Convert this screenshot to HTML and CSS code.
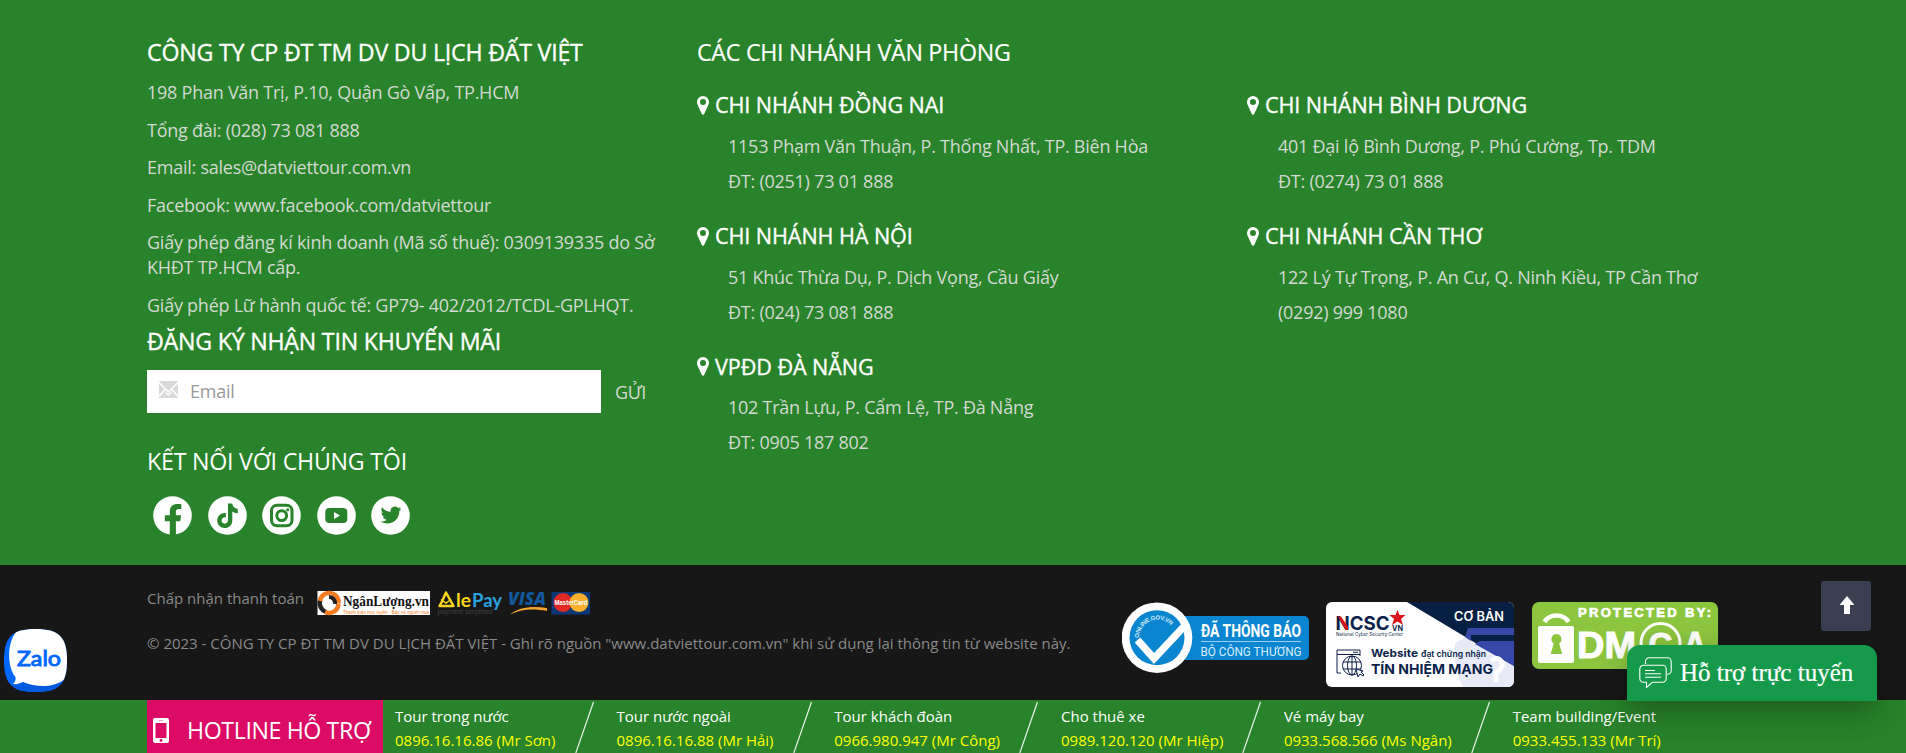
FILE: index.html
```
<!DOCTYPE html>
<html lang="vi">
<head>
<meta charset="utf-8">
<title>Đất Việt Tour</title>
<link rel="stylesheet" href="styles.css">
</head>
<body>
<svg width="0" height="0" class="defs" aria-hidden="true">
  <symbol id="pin" viewBox="0 0 12 19"><path fill-rule="evenodd" d="M6 0a6 6 0 0 1 6 6c0 1.1-.25 2-.7 3L7.2 17.9a1.3 1.3 0 0 1-2.4 0L.7 9A7 7 0 0 1 0 6a6 6 0 0 1 6-6zm0 3a3 3 0 1 0 0 6 3 3 0 0 0 0-6z"/></symbol>
</svg>
<footer class="footer">
  <div class="columns">
    <section class="company">
      <h3 class="title strong">CÔNG TY CP ĐT TM DV DU LỊCH ĐẤT VIỆT</h3>
      <div class="lines">
        <p>198 Phan Văn Trị, P.10, Quận Gò Vấp, TP.HCM</p>
        <p>Tổng đài: (028) 73 081 888</p>
        <p>Email: sales@datviettour.com.vn</p>
        <p>Facebook: www.facebook.com/datviettour</p>
        <p>Giấy phép đăng kí kinh doanh (Mã số thuế): 0309139335 do Sở KHĐT TP.HCM cấp.</p>
        <p>Giấy phép Lữ hành quốc tế: GP79- 402/2012/TCDL-GPLHQT.</p>
      </div>
      <h3 class="title strong">ĐĂNG KÝ NHẬN TIN KHUYẾN MÃI</h3>
      <form class="subscribe">
        <label class="field">
          <svg width="19" height="17" viewBox="0 0 19 17"><path d="M0 0h19v17H0z" fill="#d9d9d9"/><path d="M-.5 1l10 10L19.500 1M0 15.500l6-7M19 15.500l-6-7" fill="none" stroke="#fff" stroke-width="1.500"/><path d="M6.500 11.500L9.500 14l3-2.500" fill="none" stroke="#fff" stroke-width="1.200"/></svg>
          <input type="text" placeholder="Email">
        </label>
        <button type="button">GỬI</button>
      </form>
      <h3 class="title connect">KẾT NỐI VỚI CHÚNG TÔI</h3>
      <div class="social">
        <svg viewBox="0 0 39 39"><circle cx="19.500" cy="19.500" r="19.300"/><path class="g" d="M16.800 39V25.200h-5v-6h5v-3.700c0-5 3-7.600 7.500-7.600 1.700 0 3 .2 4 .4v4.700h-2.500c-2.200 0-2.900 1.200-2.900 2.700v3.500h5.200l-.9 6h-4.300V39z"/></svg>
        <svg viewBox="0 0 39 39"><circle cx="19.500" cy="19.500" r="19.300"/><path class="g" d="M20 7.500h4.200c.5 3 2.300 5 5.600 5.400v4.300c-2.200 0-4-.7-5.500-1.800v8.800c0 5.200-3.700 7.800-7.500 7.800-4.400 0-7.600-3.400-7.600-7.500 0-4.700 3.900-8 8.700-7.500v4.500c-2.300-.6-4.300.9-4.300 3.100 0 1.800 1.400 3.100 3.100 3.100 2 0 3.300-1.300 3.300-3.600z"/></svg>
        <svg viewBox="0 0 39 39"><circle cx="19.500" cy="19.500" r="19.300"/><g class="o"><rect x="9.500" y="9.300" width="20.500" height="20.500" rx="5.500"/><circle cx="19.700" cy="19.600" r="4.900"/></g><circle class="g" cx="25.700" cy="13.800" r="1.500"/></svg>
        <svg viewBox="0 0 39 39"><circle cx="19.500" cy="19.500" r="19.300"/><rect class="g" x="8.300" y="12" width="22" height="15" rx="4"/><path d="M17 16v7l6-3.500z"/></svg>
        <svg viewBox="0 0 39 39"><circle cx="19.500" cy="19.500" r="19.300"/><path class="g" d="M30.300 12.500c-.8.400-1.600.6-2.400.7.900-.5 1.500-1.300 1.800-2.300-.8.500-1.700.8-2.700 1a4.300 4.300 0 0 0-7.300 3.900c-3.500-.2-6.700-1.900-8.700-4.500-1.200 2-.6 4.500 1.300 5.700-.7 0-1.300-.2-1.900-.5 0 2 1.400 3.800 3.400 4.200-.6.200-1.300.2-1.900.1.500 1.700 2.100 2.900 4 3-1.800 1.400-4 2-6.300 1.700 9 5.300 19-.7 18.700-10.400.8-.7 1.500-1.500 2-2.600z"/></svg>
      </div>
    </section>
    <section class="offices">
      <h3 class="title offices-title">CÁC CHI NHÁNH VĂN PHÒNG</h3>
      <div class="branches">
        <article class="branch"><h4><svg><use href="#pin"/></svg>CHI NHÁNH ĐỒNG NAI</h4><p>1153 Phạm Văn Thuận, P. Thống Nhất, TP. Biên Hòa</p><p>ĐT: (0251) 73 01 888</p></article>
        <article class="branch"><h4><svg><use href="#pin"/></svg>CHI NHÁNH BÌNH DƯƠNG</h4><p>401 Đại lộ Bình Dương, P. Phú Cường, Tp. TDM</p><p>ĐT: (0274) 73 01 888</p></article>
        <article class="branch"><h4><svg><use href="#pin"/></svg>CHI NHÁNH HÀ NỘI</h4><p>51 Khúc Thừa Dụ, P. Dịch Vọng, Cầu Giấy</p><p>ĐT: (024) 73 081 888</p></article>
        <article class="branch"><h4><svg><use href="#pin"/></svg>CHI NHÁNH CẦN THƠ</h4><p>122 Lý Tự Trọng, P. An Cư, Q. Ninh Kiều, TP Cần Thơ</p><p>(0292) 999 1080</p></article>
        <article class="branch"><h4><svg><use href="#pin"/></svg>VPĐD ĐÀ NẴNG</h4><p>102 Trần Lựu, P. Cẩm Lệ, TP. Đà Nẵng</p><p>ĐT: 0905 187 802</p></article>
      </div>
    </section>
  </div>
</footer>
<div class="legal">
  <div class="legal-text">
    <div class="pay">
      <span>Chấp nhận thanh toán</span>
      <svg class="paylogos" width="274" height="26" viewBox="0 0 274 26">
        <rect x=".5" y="1" width="112.500" height="24" fill="#fff"/>
        <g fill="none" stroke-width="4.500"><path d="M3 12a9 9 0 0 1 12-8.500" stroke="#f47b20"/><path d="M15 3.500a9 9 0 0 1 6.500 10" stroke="#f47b20"/><path d="M3 11a9.500 9.500 0 0 0 6 11" stroke="#222"/><path d="M8 22a9.500 9.500 0 0 0 13.500-8" stroke="#f47b20"/><path d="M12 7a6 6 0 0 1 6 7" stroke="#222" stroke-width="4"/></g>
        <text x="26" y="15.500" class="serif" font-size="15.500" textLength="86" lengthAdjust="spacingAndGlyphs" fill="#111">NgânLượng.vn</text>
        <text x="26" y="23.500" class="sans" font-size="5.500" textLength="86" lengthAdjust="spacingAndGlyphs" fill="#f47b20">Thanh toán trực tuyến - Bảo vệ người mua</text>
        <path d="M129 2.500l5 9 2.500 4.500h-14l2.500-4.500z" fill="none" stroke="#fbd51b" stroke-width="2.500" stroke-linejoin="round"/><path d="M124 9.500l5 3.500 5-3.500" fill="none" stroke="#fbd51b" stroke-width="1.500"/>
        <text x="139" y="16.500" class="round" font-size="18" textLength="15" lengthAdjust="spacingAndGlyphs" fill="#fbd51b">le</text>
        <text x="155" y="16.500" class="round" font-size="18" textLength="30" lengthAdjust="spacingAndGlyphs" fill="#2ba3e0">Pay</text>
        <text x="120.500" y="23.500" class="sans" font-size="6.500" textLength="55" lengthAdjust="spacingAndGlyphs" fill="#424242">payment simplified</text>
        <text x="191" y="14.500" class="visa" font-size="17" textLength="38" lengthAdjust="spacingAndGlyphs" fill="#12579a">VISA</text>
        <path d="M193 24.500c8-7 22-9 37-6.500v3c-15-3-27-1.500-37 3.500z" fill="#f2a52c"/>
        <rect x="234.500" y="2" width="38.500" height="22.500" fill="#0b3776"/><circle cx="246" cy="12.500" r="9.500" fill="#e02a25"/><circle cx="262" cy="12.500" r="9.500" fill="#f8b02d"/>
        <text x="237.500" y="15" class="sans" font-size="7" font-weight="700" textLength="33" lengthAdjust="spacingAndGlyphs" fill="#fff">MasterCard</text>
      </svg>
    </div>
    <p>© 2023 - CÔNG TY CP ĐT TM DV DU LỊCH ĐẤT VIỆT - Ghi rõ nguồn "www.datviettour.com.vn" khi sử dụng lại thông tin từ website này.</p>
  </div>
  <div class="badges">
    <svg width="187" height="72" viewBox="0 0 187 72">
      <rect x="30" y="14" width="157" height="44" rx="5" fill="#0a86d1"/>
      <circle cx="35" cy="35.700" r="35.300" fill="#fff"/><circle cx="35" cy="35.700" r="27.500" fill="#0a86d1"/>
      <path id="arc" d="M17 36a18.500 18.500 0 0 1 36-6" fill="none"/>
      <text class="sans" font-size="6" font-weight="700" fill="#d8edf9"><textPath href="#arc" textLength="44">ONLINE.GOV.VN</textPath></text>
      <path d="M15.500 38l16.500 18.500L62.500 24" fill="none" stroke="#fff" stroke-width="7.500"/>
      <text x="79" y="35" class="cond" font-size="19" font-weight="700" textLength="100" lengthAdjust="spacingAndGlyphs" fill="#fff">ĐÃ THÔNG BÁO</text>
      <rect x="79" y="39" width="100" height="1" fill="#9ed0ee"/>
      <text x="78.500" y="53.500" class="cond" font-size="13" textLength="101" lengthAdjust="spacingAndGlyphs" fill="#d8edf9">BỘ CÔNG THƯƠNG</text>
    </svg>
    <svg width="188" height="85" viewBox="0 0 188 85">
      <defs><clipPath id="card"><rect width="188" height="85" rx="6"/></clipPath></defs>
      <g clip-path="url(#card)"><rect width="188" height="85" fill="#fff"/>
      <path d="M129 41l17-9 42 24v29h-51c-7-13-9-25-8-44z" fill="#e8eaf8"/>
      <path d="M81 0h107v64z" fill="#061f42"/><path d="M142 26h46v7h-43v6l-6-4z" fill="#3649a8"/><path d="M149 42l5-3h34v25z" fill="#3649a8"/>
      <path d="M165 59q6-5 10 0t-5 12v9" stroke="#fff" stroke-width="5" fill="none"/></g>
      <text x="9.500" y="28" class="inter" font-size="19" font-weight="700" textLength="54" lengthAdjust="spacingAndGlyphs" fill="#0a1f4a">NCSC</text>
      <path d="M12 14.500h3l7 10v3.500h-2z" fill="#d9151b"/>
      <path d="M71.500 8l2 5h6l-4.500 4 2 6-5.500-3.500-5.500 3.500 2-6-4.500-4h6z" fill="#d9151b"/>
      <text x="66" y="28.500" class="inter" font-size="7.500" font-weight="700" textLength="11" lengthAdjust="spacingAndGlyphs" fill="#0a1f4a">VN</text>
      <text x="10" y="34" class="inter" font-size="4.500" textLength="67" lengthAdjust="spacingAndGlyphs" fill="#0a1f4a">National Cyber Security Center</text>
      <text x="153" y="19" text-anchor="middle" class="inter" font-size="12.500" font-weight="600" textLength="50" lengthAdjust="spacingAndGlyphs" fill="#fff">CƠ BẢN</text>
      <g fill="none" stroke="#0a1f4a" stroke-width="1"><path d="M15 71h-4V48h23v6M11 52.500h23M27 50.300h5"/><circle cx="26" cy="63.500" r="9.500"/><ellipse cx="26" cy="63.500" rx="4.500" ry="9.500"/><path d="M17 60h18M17 67h18M26 54v19"/><path d="M30 67l2 8 2-3 3 2 1-1-3-3 2-1z" fill="#fff"/></g>
      <text x="45" y="54.500" class="inter" font-size="11" font-weight="700" textLength="47" lengthAdjust="spacingAndGlyphs" fill="#0a1f4a">Website</text>
      <text x="95" y="54.500" class="inter" font-size="8.500" font-weight="600" textLength="65" lengthAdjust="spacingAndGlyphs" fill="#0a1f4a">đạt chứng nhận</text>
      <text x="45" y="72" class="inter" font-size="13.500" font-weight="700" textLength="122" lengthAdjust="spacingAndGlyphs" fill="#0a1f4a">TÍN NHIỆM MẠNG</text>
    </svg>
    <svg width="186" height="67" viewBox="0 0 186 67">
      <rect width="186" height="67" rx="7" fill="#8cc63f"/>
      <path d="M12.500 20a13.500 12 0 0 1 24 0" fill="none" stroke="#fff" stroke-width="4.500"/><rect x="6" y="24" width="36" height="37" rx="2" fill="#fff"/>
      <path d="M24.500 32a5.200 5.200 0 0 1 2.700 9.500l3 10.500H18.700l3-10.500A5.200 5.200 0 0 1 24.500 32z" fill="#8cc63f"/>
      <text x="46" y="14.800" class="sans heavy" font-size="13" textLength="133" stroke="#fff" stroke-width=".7" fill="#fff">PROTECTED BY:</text>
      <text x="45" y="55.500" class="sans heavy" font-size="37" textLength="59" lengthAdjust="spacingAndGlyphs" stroke="#fff" stroke-width="1" fill="#fff">DM</text>
      <circle cx="128.500" cy="41" r="19.500" fill="none" stroke="#fff" stroke-width="3"/>
      <text x="116.500" y="54" class="sans heavy" font-size="33" stroke="#fff" fill="#fff">C</text>
      <text x="151" y="55.500" class="sans heavy" font-size="36" textLength="24" lengthAdjust="spacingAndGlyphs" stroke="#fff" fill="#fff">A</text>
    </svg>
  </div>
</div>
<div class="hotline">
  <div class="hotline-label"><svg width="16" height="25" viewBox="0 0 16 25"><rect width="16" height="25" rx="2" fill="#fff"/><rect x="2.500" y="5" width="11" height="15" fill="#db0b66"/><circle cx="8" cy="22.500" r="1.400" fill="#db0b66"/><path d="M6 2.500h4" stroke="#f3a4c6"/></svg><span>HOTLINE HỖ TRỢ</span></div>
  <div class="desk d1"><span>Tour trong nước</span><b>0896.16.16.86 (Mr Sơn)</b></div>
  <svg class="slash"><path d="M18.500 1L.8 52"/></svg>
  <div class="desk d2"><span>Tour nước ngoài</span><b>0896.16.16.88 (Mr Hải)</b></div>
  <svg class="slash"><path d="M18.500 1L.8 52"/></svg>
  <div class="desk d3"><span>Tour khách đoàn</span><b>0966.980.947 (Mr Công)</b></div>
  <svg class="slash"><path d="M18.500 1L.8 52"/></svg>
  <div class="desk d4"><span>Cho thuê xe</span><b>0989.120.120 (Mr Hiệp)</b></div>
  <svg class="slash"><path d="M18.500 1L.8 52"/></svg>
  <div class="desk d5"><span>Vé máy bay</span><b>0933.568.566 (Ms Ngân)</b></div>
  <svg class="slash"><path d="M18.500 1L.8 52"/></svg>
  <div class="desk"><span>Team building/Event</span><b>0933.455.133 (Mr Trí)</b></div>
</div>
<a class="zalo"><svg width="63" height="63" viewBox="0 0 63 63"><defs><clipPath id="zc"><path d="M31.500 0C55 0 63 8 63 31.500S55 63 31.500 63 0 55 0 31.500 8 0 31.500 0z"/></clipPath></defs><g clip-path="url(#zc)"><rect width="63" height="63" fill="#0068ff"/><path d="M8 56l12-3c12 5 30 5 43-4v14H15z" fill="#005be0"/><path d="M15 0C2 11 3 38 11.500 48c.5 3-.5 5-2.500 7 4 .5 7-.5 10-2 14 6 31 5 40-1.500l4-3V0z" fill="#fff"/></g><text x="13" y="36.500" class="zt" font-size="20.500" textLength="44" lengthAdjust="spacingAndGlyphs">Zalo</text></svg></a>
<a class="to-top"><svg width="16" height="18" viewBox="0 0 16 18"><path d="M8 0l7.500 9H11v9H5V9H.5z" fill="#fff"/></svg></a>
<a class="chat"><svg width="33" height="31" viewBox="0 0 33 31"><g fill="none" stroke="#fff" stroke-width="1.100" stroke-linejoin="round"><path d="M6.500 7V4.500a3.700 3.700 0 0 1 3.700-3.700h18.300a3.700 3.700 0 0 1 3.700 3.700v9a3.700 3.700 0 0 1-3.700 3.700H28"/><path d="M4.500 8.300h19a3.700 3.700 0 0 1 3.700 3.700v9.500a3.700 3.700 0 0 1-3.700 3.700H13.500L7.500 30.500v-5.300h-3A3.700 3.700 0 0 1 .8 21.500V12a3.700 3.700 0 0 1 3.700-3.700z"/><path d="M6 13.500h10M6 16.800h16M6 20.300h16"/></g></svg><span>Hỗ trợ trực tuyến</span></a>
</body>
</html>
```
FILE: styles.css
```
* { box-sizing: border-box; }
body { margin: 0; width: 1906px; height: 753px; overflow: hidden; position: relative; background: #28832a; font-family: "Open Sans", sans-serif; }
h3, h4, p { margin: 0; font-weight: 400; }
svg { display: block; flex: none; }
.defs { position: absolute; }

.footer { height: 565px; padding: 35px 0 0 147px; color: #d3d9d3; font-size: 18px; letter-spacing: -.25px; }
.columns { display: grid; grid-template-columns: 550px 1100px; }
.title { font-size: 23.2px; line-height: 34px; letter-spacing: -.22px; color: #fff; white-space: nowrap; }
.strong { -webkit-text-stroke: .35px #fff; }
.lines { display: flex; flex-direction: column; gap: 12.5px; padding: 11px 0 6.5px; width: 520px; line-height: 25px; }
.subscribe { display: flex; margin: 12px 0 31px; }
.field { display: flex; width: 454px; height: 43px; padding-left: 12px; background: #fff; align-items: center; gap: 12px; }
.field svg { margin-bottom: 4px; }
.field input { border: 0; outline: 0; padding: 0; font: 18px/25px "Open Sans", sans-serif; letter-spacing: -.24px; }
.field input::placeholder { color: #999; }
.subscribe button { border: 0; background: none; padding: 1px 0 0 14px; color: #d3d9d3; font: 18px "Open Sans", sans-serif; letter-spacing: -.4px; }
.social { display: flex; gap: 15.5px; padding: 18px 0 0 6px; }
.social svg { width: 39px; height: 39px; fill: #fff; }
.social .g { fill: #28832a; }
.social .o { fill: none; stroke: #28832a; stroke-width: 3; }

.offices-title { letter-spacing: -.25px; -webkit-text-stroke: .2px #fff; }
.branches { display: grid; grid-template-columns: 550px 550px; grid-auto-rows: 130.7px; padding-top: 20.4px; }
.branch h4 { display: flex; align-items: center; gap: 6px; font-size: 21.6px; line-height: 32px; letter-spacing: -.08px; color: #fff; -webkit-text-stroke: .35px #fff; }
.branch h4 svg { width: 12px; height: 19px; fill: #fff; }
.branch p { padding-left: 31px; line-height: 35px; }
.branch h4 + p { margin-top: 7.5px; }

.legal { display: flex; justify-content: space-between; height: 135px; padding: 0 188px 0 147px; background: #171717; color: #898989; font-size: 15px; line-height: 24px; white-space: nowrap; }
.legal-text { padding-top: 21px; }
.pay { display: flex; gap: 13px; height: 45px; }
.paylogos { margin-top: 4px; }
.badges { display: flex; gap: 18px; padding-top: 37px; }
.badges svg:first-child { margin-right: -1px; }
.serif { font-family: "Liberation Serif", serif; font-weight: 700; }
.sans { font-family: "Liberation Sans", sans-serif; }
.heavy { font-weight: 700; }
.round { font-family: Lato, sans-serif; font-weight: 700; }
.visa { font-family: "Open Sans", sans-serif; font-weight: 800; font-style: italic; }
.cond { font-family: Roboto, sans-serif; }
.inter { font-family: Inter, sans-serif; }

.hotline { display: flex; height: 53px; padding-left: 147px; color: #fff; font-size: 15px; line-height: 24px; white-space: nowrap; }
.hotline-label { display: flex; align-items: center; gap: 18px; width: 236px; margin-right: 12px; padding: 7px 0 0 6px; background: #db0b66; font-size: 23.2px; line-height: 34px; letter-spacing: -.4px; }
.hotline-label svg { margin-top: 1px; }
.desk { display: flex; flex-direction: column; padding-top: 4px; }
.desk b { font-weight: 400; color: #ff0; }
.d1 { width: 180px; }
.d2 { width: 176.3px; }
.d3 { width: 185.2px; }
.d4 { width: 181.4px; }
.d5 { width: 187.3px; }
.slash { width: 20px; height: 52px; margin: 1px 21.5px 0 0; fill: none; stroke: #e9f3e9; stroke-width: 1.2; }

.zalo { position: absolute; left: 4px; top: 629px; }
.zt { font-family: Lato, sans-serif; font-weight: 400; fill: #0068ff; stroke: #0068ff; stroke-width: .9; }
.to-top { position: absolute; left: 1821px; top: 581px; width: 50px; height: 50px; display: flex; align-items: center; justify-content: center; padding: 0 0 2px 1px; border-radius: 3px; background: #3c3f51; }
.chat { position: absolute; left: 1627px; top: 645px; width: 250px; height: 56px; display: flex; gap: 8px; padding: 12px 0 0 12px; border-radius: 13px 13px 0 0; background: #159a4b; color: #fff; font: 25px/32px "Liberation Serif", serif; box-shadow: 0 10px 30px rgba(0, 0, 0, .3); white-space: nowrap; }
.chat span { -webkit-text-stroke: .2px #fff; }
```
